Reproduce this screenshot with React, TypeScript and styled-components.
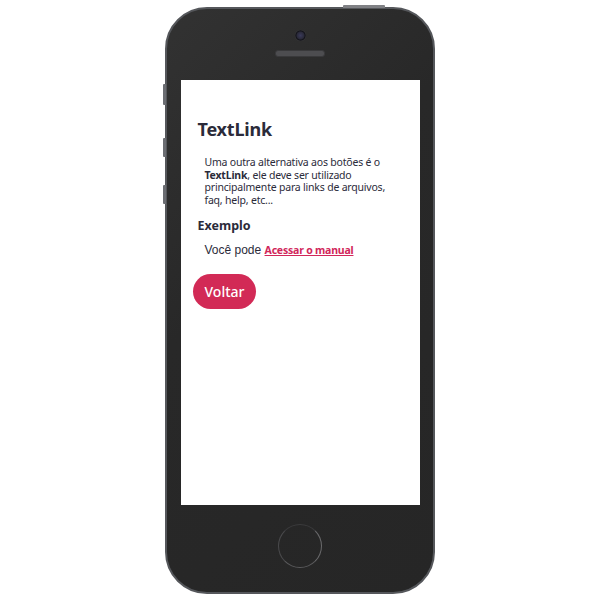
import React from 'react';
import styled, { createGlobalStyle } from 'styled-components';

const GlobalStyle = createGlobalStyle`
  html, body {
    margin: 0;
    padding: 0;
    background: #ffffff;
  }
`;

const Page = styled.div`
  width: 600px;
  height: 600px;
  display: flex;
  justify-content: center;
  padding-top: 7px;
  box-sizing: border-box;
`;

const Phone = styled.div`
  position: relative;
  width: 270px;
  height: 587px;
  box-sizing: border-box;
  border-radius: 42px;
  border: 2px solid #55575b;
  background: linear-gradient(135deg, #323232 0%, #282828 40%, #262626 100%);
  display: flex;
  flex-direction: column;
  align-items: center;
`;

const SideButton = styled.div<{ $top: number; $height: number }>`
  position: absolute;
  left: -4px;
  top: ${(p) => p.$top}px;
  width: 3px;
  height: ${(p) => p.$height}px;
  background: #6b6d72;
  border-radius: 1px 0 0 1px;
`;

const TopButton = styled.div`
  position: absolute;
  top: -4px;
  left: 176px;
  width: 42px;
  height: 3px;
  background: #808185;
  border-radius: 1px 1px 0 0;
`;

const TopBezel = styled.div`
  height: 71px;
  width: 100%;
  display: flex;
  flex-direction: column;
  align-items: center;
  padding-top: 21px;
  box-sizing: border-box;
`;

const Camera = styled.div`
  width: 11px;
  height: 11px;
  border-radius: 50%;
  background: radial-gradient(circle, #3a3a5a 0%, #2a2a3a 45%, #111116 60%, #3f3f44 75%);
`;

const Speaker = styled.div`
  margin-top: 9px;
  width: 48px;
  height: 5px;
  border-radius: 3px;
  background: #4d4d50;
  border: 1px solid #39393b;
`;

const Screen = styled.div`
  width: 239px;
  height: 425px;
  background: #ffffff;
  box-sizing: border-box;
  padding: 38px 0 0 12px;
  font-family: 'Noto Sans', 'Open Sans', sans-serif;
  color: #2b2b3a;
`;

const Content = styled.div`
  padding-left: 5px;
`;

const Title = styled.h1`
  margin: 0;
  font-size: 18px;
  font-weight: 700;
  letter-spacing: -0.2px;
  line-height: 22px;
`;

const Paragraph = styled.p`
  margin: 16px 0 0 12px;
  font-size: 10.5px;
  line-height: 12.5px;
  letter-spacing: -0.2px;
`;

const Strong = styled.strong`
  font-weight: 700;
`;

const Subtitle = styled.h2`
  margin: 12px 0 0;
  font-size: 12.5px;
  font-weight: 700;
  line-height: 16px;
`;

const Example = styled.div`
  margin: 8px 0 0 12px;
  font-family: 'Liberation Sans', Arial, sans-serif;
  font-size: 12px;
  line-height: 16px;
  color: #2b2b3a;
`;

const Link = styled.a`
  font-family: 'Noto Sans', 'Open Sans', sans-serif;
  font-size: 10.5px;
  font-weight: 700;
  color: #d1265a;
  text-decoration: underline;
  letter-spacing: -0.2px;
`;

const Button = styled.button`
  margin-top: 16px;
  height: 35px;
  padding: 0 12px;
  border: none;
  border-radius: 18px;
  background: #d22a56;
  color: #ffffff;
  font-family: 'Noto Sans', 'Open Sans', sans-serif;
  font-size: 14px;
  font-weight: 500;
`;

const BottomBezel = styled.div`
  flex: 1;
  display: flex;
  align-items: flex-start;
  justify-content: center;
  padding-top: 19px;
`;

const HomeButton = styled.div`
  width: 44px;
  height: 44px;
  border-radius: 50%;
  box-sizing: border-box;
  border: 1.5px solid #4a4a4c;
  border-top-color: #3a3a3c;
  border-right-color: #6a6a6c;
  border-bottom-color: #5a5a5c;
`;

const App: React.FC = () => (
  <>
    <GlobalStyle />
    <Page>
      <Phone>
        <TopButton />
        <SideButton $top={75} $height={21} />
        <SideButton $top={129} $height={19} />
        <SideButton $top={176} $height={19} />
        <TopBezel>
          <Camera />
          <Speaker />
        </TopBezel>
        <Screen>
          <Content>
            <Title>TextLink</Title>
          </Content>
          <Paragraph>
            Uma outra alternativa aos botões é o
            <br />
            <Strong>TextLink</Strong>
            , ele deve ser utilizado
            <br />
            principalmente para links de arquivos,
            <br />
            faq, help, etc...
          </Paragraph>
          <Content>
            <Subtitle>Exemplo</Subtitle>
          </Content>
          <Example>
            Você pode
            {' '}
            <Link href="#">Acessar o manual</Link>
          </Example>
          <Button type="button">Voltar</Button>
        </Screen>
        <BottomBezel>
          <HomeButton />
        </BottomBezel>
      </Phone>
    </Page>
  </>
);

export default App;
